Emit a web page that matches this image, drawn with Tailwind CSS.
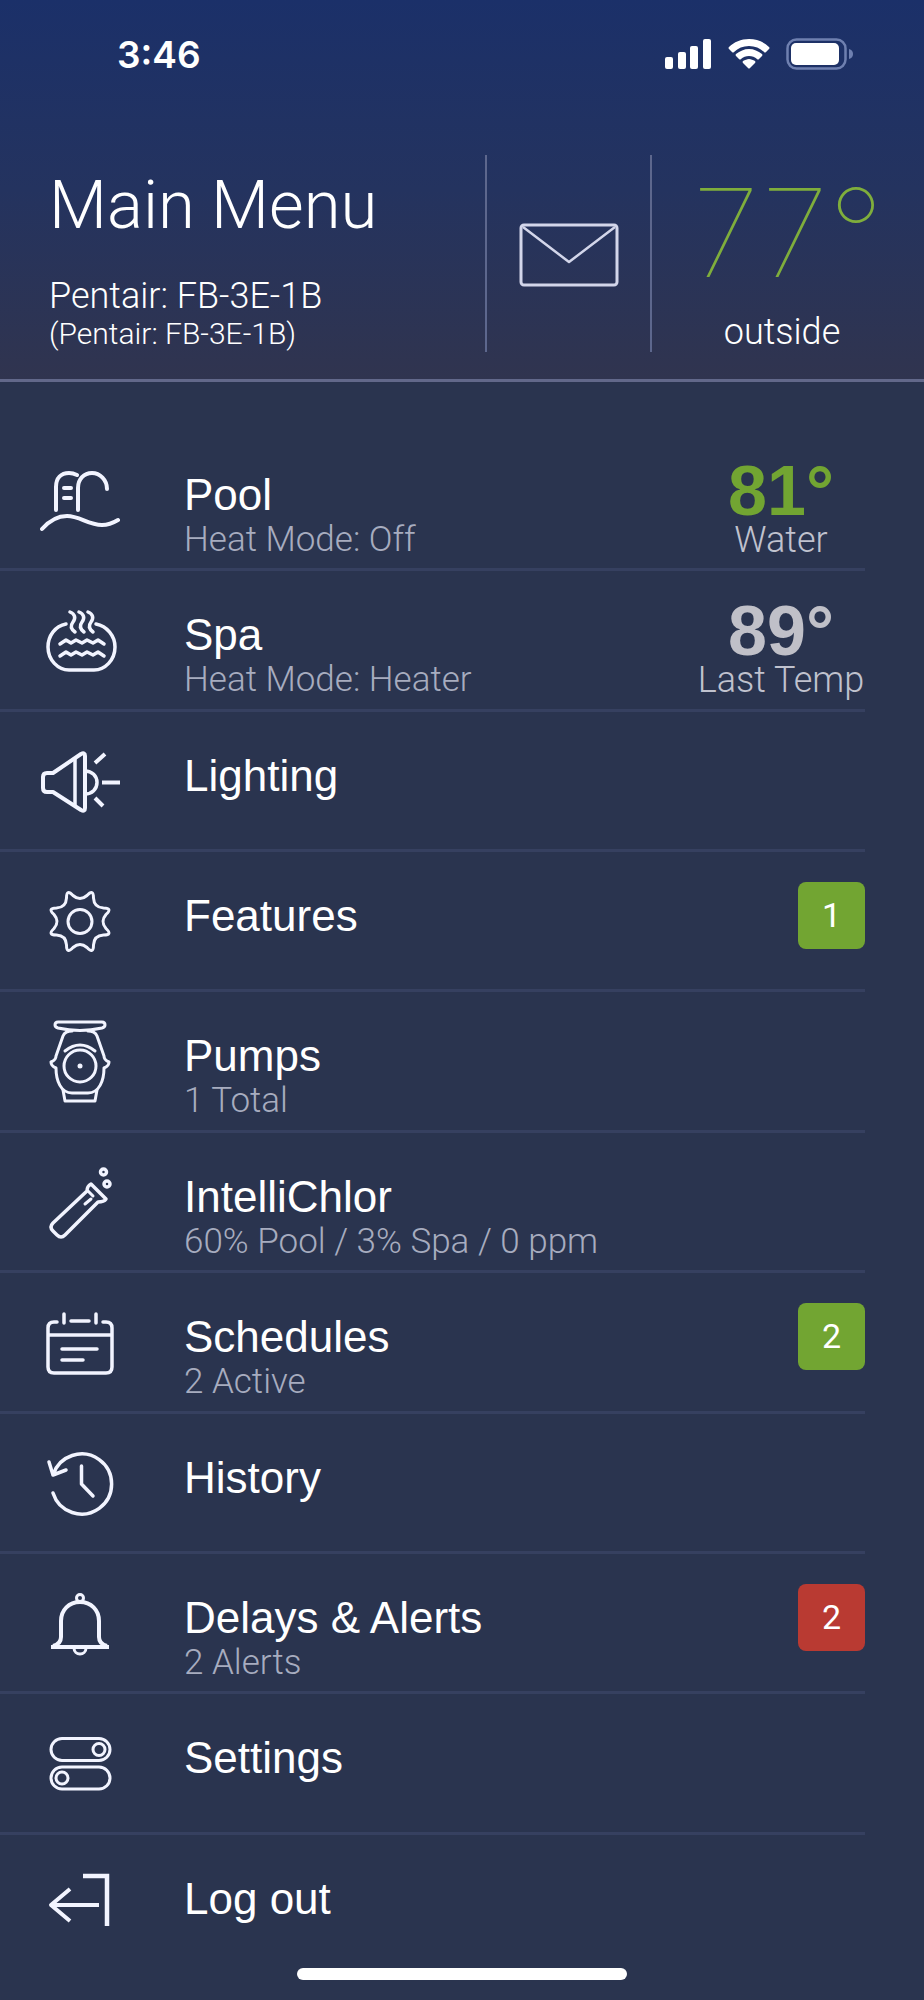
<!DOCTYPE html>
<html lang="en">
<head>
    <meta charset="UTF-8">
    <meta name="viewport" content="width=device-width, initial-scale=1.0">
    <title>Main Menu</title>
    <script src="https://cdn.jsdelivr.net/npm/@tailwindcss/browser@4"></script>
</head>
<body class="bg-[#2a344f] text-white font-['Roboto','Liberation_Sans',sans-serif]">
    <div class="relative flex min-h-screen flex-col">

        <header class="border-b-3 border-[#62688a] bg-linear-to-b from-[#1b3069] via-[#24335f] to-[#30344f]">
            <!-- Status bar -->
            <div class="flex h-[155px] items-start justify-between pt-[34px] pr-[71px] pl-[117px]">
                <span class="font-['Inter',sans-serif] text-[37px] leading-[42px] font-semibold">3:46</span>
                <div class="flex items-center gap-4 pt-1">
                    <svg class="h-[32px] w-[48px]" viewBox="0 0 48 32" fill="white" aria-label="Signal">
                        <rect x="1" y="19" width="8" height="12" rx="2"/>
                        <rect x="14" y="14" width="8" height="17" rx="2"/>
                        <rect x="26" y="8" width="8" height="23" rx="2"/>
                        <rect x="39" y="1" width="8" height="30" rx="2"/>
                    </svg>
                    <svg class="h-[32px] w-[42px]" viewBox="0 0 42 32" fill="white" aria-label="Wi-Fi">
                        <path d="M21 1C29 1 36 4 41 9Q42 10 41 11L38 14Q37 15 36 14C32 10 27 8 21 8S10 10 6 14Q5 15 4 14L1 11Q0 10 1 9C6 4 13 1 21 1z"/>
                        <path d="M21 11C26 11 30 13 34 16Q35 17 34 18L31 21Q30 22 29 21C27 19 24 18 21 18S15 19 13 21Q12 22 11 21L8 18Q7 17 8 16C12 13 16 11 21 11z"/>
                        <path d="M21 21C23 21 25 22 27 23Q28 24 27 25L22 30Q21 31 20 30L15 25Q14 24 15 23C17 22 19 21 21 21z"/>
                    </svg>
                    <svg class="h-[32px] w-[67px]" viewBox="0 0 67 32" aria-label="Battery">
                        <rect x="1.5" y="1.5" width="58" height="29" rx="9" fill="none" stroke="#6f80b0" stroke-width="2.5"/>
                        <rect x="5" y="5" width="48" height="22" rx="5" fill="white"/>
                        <path d="M63 11q4 1 4 5t-4 5z" fill="#6f80b0"/>
                    </svg>
                </div>
            </div>

            <!-- Title, messages and outside temperature -->
            <div class="flex pb-[27px]">
                <div class="flex-1 pt-3.5 pl-[49px] font-light">
                    <h1 class="text-[67px] leading-[72px]">Main Menu</h1>
                    <p class="mt-[35px] text-[36px] leading-10">Pentair: FB-3E-1B</p>
                    <p class="text-[30px] leading-9">(Pentair: FB-3E-1B)</p>
                </div>
                <button type="button" aria-label="Messages" class="flex w-[167px] justify-center border-x-2 border-[#5d678d] pt-[68px]">
                    <svg class="h-[64px] w-[100px]" viewBox="0 0 100 64" fill="none" stroke="#d3d6ea" stroke-width="3" stroke-linejoin="round">
                        <rect x="2" y="2" width="96" height="60" rx="3"/>
                        <path d="M4 4L50 39 96 4" stroke-width="2.5"/>
                    </svg>
                </button>
                <div class="w-[272px] pt-7 text-center">
                    <p class="font-['Inter',sans-serif] text-[122px] leading-[100px] font-thin text-[#7fae3c]">77°</p>
                    <p class="mt-[29px] pr-3 text-[36px] leading-10 font-light">outside</p>
                </div>
            </div>
        </header>

        <nav class="flex flex-1 flex-col pt-[49px] pr-[59px] pb-[25px]">
            <ul class="grid flex-1 auto-rows-fr">
                <li class="border-b-3 border-[#364060]">
                    <a href="#pool" class="flex">
                        <svg class="mt-[27px] ml-10 h-[84px] w-[80px]" viewBox="0 0 80 84" fill="none" stroke="#f2f4ff" stroke-width="4" stroke-linecap="round">
                            <path d="M16 52V29C16 20 21 15 29 15 32 15 35 16 37 17"/>
                            <path d="M38 52V30C38 21 44 15 52 15S67 22 67 31"/>
                            <path d="M24 30H31M24 40H31M2 71C10 62 18 58 27 58 40 58 48 67 62 67 68 67 73 65 78 62"/>
                        </svg>
                        <div class="ml-16 flex-1 pt-10">
                            <h2 class="font-['Liberation_Sans',sans-serif] text-[44px] leading-[48px]">Pool</h2>
                            <p class="text-[35px] leading-[42px] font-light text-[#a7acbf]">Heat Mode: Off</p>
                        </div>
                        <div class="w-[168px] pt-[34px] text-center">
                            <p class="font-['Liberation_Sans',sans-serif] text-[70px] leading-[52px] font-bold text-[#72a532]">81°</p>
                            <p class="mt-0.5 text-[36px] leading-[42px] font-light text-[#c0c2ce]">Water</p>
                        </div>
                    </a>
                </li>
                <li class="border-b-3 border-[#364060]">
                    <a href="#spa" class="flex">
                        <svg class="mt-[27px] ml-10 h-[84px] w-[80px]" viewBox="0 0 80 84" fill="none" stroke="#f2f4ff" stroke-width="3.5" stroke-linecap="round" stroke-linejoin="round">
                            <path d="M26 26C15 28 8 38 8 49 8 62 18 72 29 72H54C65 72 75 62 75 49 75 38 67 28 56 26"/>
                            <path d="M30 14C35 16 36 20 33 24S31 31 35 34M39 14C44 16 45 20 42 24S40 31 44 34M48 14C53 16 54 20 51 24S49 31 53 34"/>
                            <path d="M20 46L26 42 31 45 36 42 42 45 47 42 53 45 58 42 64 46M20 58L26 54 31 57 36 54 42 57 47 54 53 57 58 54 64 58"/>
                        </svg>
                        <div class="ml-16 flex-1 pt-10">
                            <h2 class="font-['Liberation_Sans',sans-serif] text-[44px] leading-[48px]">Spa</h2>
                            <p class="text-[35px] leading-[42px] font-light text-[#a7acbf]">Heat Mode: Heater</p>
                        </div>
                        <div class="w-[168px] pt-[34px] text-center">
                            <p class="font-['Liberation_Sans',sans-serif] text-[70px] leading-[52px] font-bold text-[#c0c0c8]">89°</p>
                            <p class="mt-0.5 text-[36px] leading-[42px] font-light whitespace-nowrap text-[#c0c2ce]">Last Temp</p>
                        </div>
                    </a>
                </li>
                <li class="border-b-3 border-[#364060]">
                    <a href="#lighting" class="flex">
                        <svg class="mt-[27px] ml-10 h-[84px] w-[80px]" viewBox="0 0 80 84" fill="none" stroke="#f2f4ff" stroke-width="4" stroke-linejoin="round">
                            <path d="M7 34H13L41 15Q45 13 45 17V69Q45 73 41 71L13 53H7Q3 53 3 49V38Q3 34 7 34z"/>
                            <path d="M35 20V67M45 32C52 32 57 37 57 43.5S52 55 45 55" stroke-width="3.5"/>
                            <path d="M55 24L65 15M62 43.5H80M55 59L63 67"/>
                        </svg>
                        <div class="ml-16 flex-1 pt-10">
                            <h2 class="font-['Liberation_Sans',sans-serif] text-[44px] leading-[48px]">Lighting</h2>
                        </div>
                    </a>
                </li>
                <li class="border-b-3 border-[#364060]">
                    <a href="#features" class="flex">
                        <svg class="mt-[27px] ml-10 h-[84px] w-[80px]" viewBox="0 0 80 84" fill="none" stroke="#f2f4ff" stroke-width="3" stroke-linejoin="round">
                            <path d="M33 16.5Q40 22.5 47 16.5Q53.5 9.5 53.5 19Q54 28.5 63.5 29Q73 29 66 35.5Q60 42.5 66 49.5Q73 56 63.5 56Q54 56.5 53.5 66Q53.5 75.5 47 68.5Q40 62.5 33 68.5Q26.5 75.5 26.5 66Q26 56.5 16.5 56Q7 56 14 49.5Q20 42.5 14 35.5Q7 29 16.5 29Q26 28.5 26.5 19Q26.5 9.5 33 16.5z"/>
                            <circle cx="40" cy="42.5" r="12"/>
                        </svg>
                        <div class="ml-16 flex-1 pt-10">
                            <h2 class="font-['Liberation_Sans',sans-serif] text-[44px] leading-[48px]">Features</h2>
                        </div>
                        <span class="mt-[30px] flex size-[67px] items-center justify-center rounded-lg bg-[#72a532] text-[34px]">1</span>
                    </a>
                </li>
                <li class="border-b-3 border-[#364060]">
                    <a href="#pumps" class="flex">
                        <svg class="mt-[27px] ml-10 h-[84px] w-[80px]" viewBox="0 0 80 84" fill="none" stroke="#f2f4ff" stroke-width="3" stroke-linejoin="round" stroke-linecap="round">
                            <path d="M18 3H62Q65 3 65 6 65 8 62 9 40 14 18 9 15 8 15 6 15 3 18 3z"/>
                            <path d="M32 12Q25 12 23 17L16 37Q16 41 11 43 11 47 16 49C16 62 21 74 32 74H48C59 74 64 62 64 49Q69 47 69 43 64 41 64 37L57 17Q55 12 48 12"/>
                            <path d="M23 71L25 82H55L57 71M25 32Q40 20 55 32"/>
                            <circle cx="40" cy="47" r="16"/>
                            <circle cx="40" cy="47" r="2.5" fill="#f2f4ff" stroke="none"/>
                        </svg>
                        <div class="ml-16 flex-1 pt-10">
                            <h2 class="font-['Liberation_Sans',sans-serif] text-[44px] leading-[48px]">Pumps</h2>
                            <p class="text-[35px] leading-[42px] font-light text-[#a7acbf]">1 Total</p>
                        </div>
                    </a>
                </li>
                <li class="border-b-3 border-[#364060]">
                    <a href="#intellichlor" class="flex">
                        <svg class="mt-[27px] ml-10 h-[84px] w-[80px]" viewBox="0 0 80 84" fill="none" stroke="#f2f4ff" stroke-width="3.5" stroke-linejoin="round" stroke-linecap="round">
                            <path d="M51 24L66 39Q64 42 58 42L25 75Q21 79 17 75L13 71Q9 67 13 63L47 31Q47 26 51 24z"/>
                            <path d="M48 31L53 36M45 44L51 39" stroke-width="3"/>
                            <circle cx="63.5" cy="12" r="3"/>
                            <circle cx="67" cy="24" r="3"/>
                        </svg>
                        <div class="ml-16 flex-1 pt-10">
                            <h2 class="font-['Liberation_Sans',sans-serif] text-[44px] leading-[48px]">IntelliChlor</h2>
                            <p class="text-[35px] leading-[42px] font-light text-[#a7acbf]">60% Pool / 3% Spa / 0 ppm</p>
                        </div>
                    </a>
                </li>
                <li class="border-b-3 border-[#364060]">
                    <a href="#schedules" class="flex">
                        <svg class="mt-[27px] ml-10 h-[84px] w-[80px]" viewBox="0 0 80 84" fill="none" stroke="#f2f4ff" stroke-width="3.5" stroke-linecap="round">
                            <path d="M17 22H14Q8 22 8 28V67Q8 73 14 73H66Q72 73 72 67V28Q72 22 66 22H63M31 21H49M24 14V23M56 14V23M8 35H72M22 49H57M22 60H43"/>
                        </svg>
                        <div class="ml-16 flex-1 pt-10">
                            <h2 class="font-['Liberation_Sans',sans-serif] text-[44px] leading-[48px]">Schedules</h2>
                            <p class="text-[35px] leading-[42px] font-light text-[#a7acbf]">2 Active</p>
                        </div>
                        <span class="mt-[30px] flex size-[67px] items-center justify-center rounded-lg bg-[#72a532] text-[34px]">2</span>
                    </a>
                </li>
                <li class="border-b-3 border-[#364060]">
                    <a href="#history" class="flex">
                        <svg class="mt-[27px] ml-10 h-[84px] w-[80px]" viewBox="0 0 80 84" fill="none" stroke="#f2f4ff" stroke-width="3.5" stroke-linecap="round" stroke-linejoin="round">
                            <path d="M13 34A30 30 0 1 1 13 52M9 21L13 34 26 29M41.5 25V43L53 55"/>
                        </svg>
                        <div class="ml-16 flex-1 pt-10">
                            <h2 class="font-['Liberation_Sans',sans-serif] text-[44px] leading-[48px]">History</h2>
                        </div>
                    </a>
                </li>
                <li class="border-b-3 border-[#364060]">
                    <a href="#alerts" class="flex">
                        <svg class="mt-[27px] ml-10 h-[84px] w-[80px]" viewBox="0 0 80 84" fill="none" stroke="#f2f4ff" stroke-width="4">
                            <path d="M11 66H69M13 65Q21 63 21 56V40C21 29 29 21 40 21S59 29 59 40V56Q59 63 67 65"/>
                            <path d="M34 67C34 75 46 75 46 67" stroke-width="3"/>
                            <circle cx="40" cy="17" r="3.5" stroke-width="3"/>
                        </svg>
                        <div class="ml-16 flex-1 pt-10">
                            <h2 class="font-['Liberation_Sans',sans-serif] text-[44px] leading-[48px]">Delays &amp; Alerts</h2>
                            <p class="text-[35px] leading-[42px] font-light text-[#a7acbf]">2 Alerts</p>
                        </div>
                        <span class="mt-[30px] flex size-[67px] items-center justify-center rounded-lg bg-[#b93a32] text-[34px]">2</span>
                    </a>
                </li>
                <li class="border-b-3 border-[#364060]">
                    <a href="#settings" class="flex">
                        <svg class="mt-[27px] ml-10 h-[84px] w-[80px]" viewBox="0 0 80 84" fill="none" stroke="#f2f4ff" stroke-width="3">
                            <rect x="11" y="17.5" width="59" height="22" rx="11"/>
                            <rect x="11" y="46" width="59" height="22" rx="11"/>
                            <circle cx="59" cy="28.5" r="6"/>
                            <circle cx="22" cy="57" r="6"/>
                        </svg>
                        <div class="ml-16 flex-1 pt-10">
                            <h2 class="font-['Liberation_Sans',sans-serif] text-[44px] leading-[48px]">Settings</h2>
                        </div>
                    </a>
                </li>
                <li>
                    <a href="#logout" class="flex">
                        <svg class="mt-[27px] ml-10 h-[84px] w-[80px]" viewBox="0 0 80 84" fill="none" stroke="#f2f4ff" stroke-width="4">
                            <path d="M43 14H67V64" stroke-width="4.5"/>
                            <path d="M11 43H59M30 27L11 43 30 59" stroke-linejoin="round"/>
                        </svg>
                        <div class="ml-16 flex-1 pt-10">
                            <h2 class="font-['Liberation_Sans',sans-serif] text-[44px] leading-[48px]">Log out</h2>
                        </div>
                    </a>
                </li>
            </ul>
        </nav>

        <!-- Home indicator -->
        <div class="absolute bottom-5 left-1/2 h-3 w-[330px] -translate-x-1/2 rounded-full bg-white"></div>
    </div>
</body>
</html>
